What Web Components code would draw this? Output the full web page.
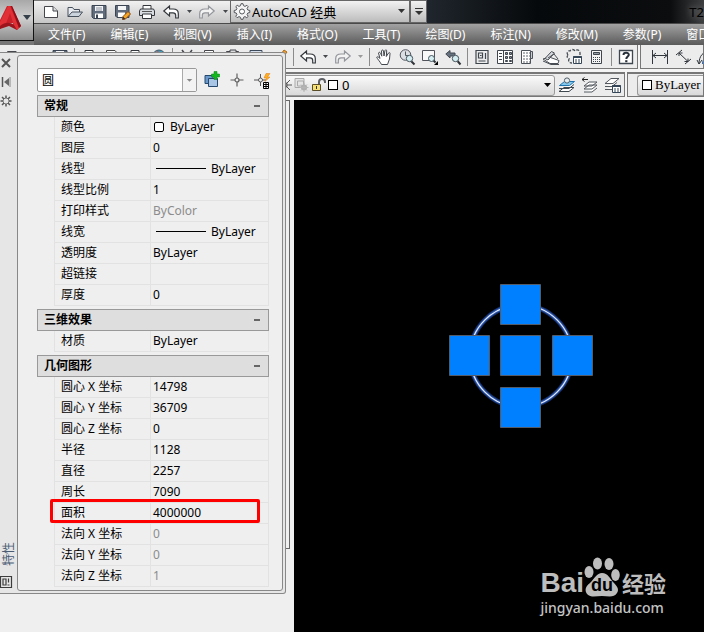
<!DOCTYPE html>
<html lang="zh-CN">
<head>
<meta charset="utf-8">
<title>AutoCAD</title>
<style>
html, body { height: 100%; }
body { margin: 0; overflow: hidden; background: #efefef; color: #000; font: 12px/16px "Noto Sans", "Noto Sans CJK SC", sans-serif; }
</style>
</head>
<body>
<cad-app></cad-app>
<script>
const ICONS = {
  new: '<path d="M1.5 2.5H10L14.5 7v6.500H1.5z" fill="#fff" stroke="#45474c"/><path d="M10 2.500V7h4.500" fill="#ddd" stroke="#45474c"/>',
  open: '<path d="M1 12.500V3.500H5.500L7 5.500h5.500V8" fill="#e8ebef" stroke="#46505c"/><path d="M1 12.500 5 8h10.500L12 12.500z" fill="#cbd3dc" stroke="#46505c"/>',
  save: '<path d="M1 1.500H15V14.500H2.500L1 13z" fill="#606b7b" stroke="#3b4453"/><path d="M4 2h8v5H4z" fill="#f4f5f7"/><path d="M5 4h6M5 6h6" stroke="#8a929c"/><path d="M4 9.500h8V14H4z" fill="#fff"/><path d="M5 10.500h2V14H5z" fill="#3b4453"/>',
  saveas: '<path d="M.5 1.500H14V13.500H2L.5 12z" fill="#606b7b" stroke="#3b4453"/><path d="M3 2h8v4H3z" fill="#f4f5f7"/><path d="M3 8.500h7V13H3z" fill="#fff"/><path d="M8 12.500 13 7.500 15.500 10 10.500 15 7.500 15.500z" fill="#f5a524" stroke="#8a4a16"/><path d="M8 12.500 10.500 15 7.500 15.500z" fill="#333"/>',
  print: '<path d="M4 5V1.500h8V5" fill="#fff" stroke="#33363b"/><path d="M1.500 5h13l1 2v4.500H.5V7z" fill="#d9dce0" stroke="#33363b"/><path d="M3.500 10h9v4.500h-9z" fill="#fff" stroke="#33363b"/><path d="M3 7.500h10" stroke="#555"/>',
  preview: '<path d="M2.500 1.500H11L14 5v9.500H2.500z" fill="#fff" stroke="#444"/><circle cx="10" cy="9" r="3" fill="#bcdcee" stroke="#444"/>',
  globe: '<circle cx="9" cy="7.500" r="6.500" fill="#3da1bd" stroke="#456"/><path d="M4 4l4-2 2 2-2 3-3-1z" fill="#d64a4a"/><path d="M11 3l3 3-3 2z" fill="#e6f4f8"/>',
  cut: '<path d="M3 1 12 13M13 1 4 13" stroke="#45474c" stroke-width="1.500" fill="none"/><circle cx="3" cy="13" r="2" fill="none" stroke="#45474c"/><circle cx="13" cy="13" r="2" fill="none" stroke="#45474c"/>',
  copy: '<path d="M2.500 1.500h9v10h-9z" fill="#fff" stroke="#45474c"/><path d="M6 4.500h9V15H6z" fill="#eee" stroke="#45474c"/>',
  paste: '<path d="M1.500 2.500h12v12h-12z" fill="#8d949d" stroke="#45474c"/><path d="M5 1h6v3H5z" fill="#ddd" stroke="#45474c"/>',
  brush: '<path d="M2 1.500h12v4H2z" fill="#d4dde9" stroke="#3c4a5b"/><path d="M8 6v8" stroke="#444"/>',
  pencil: '<path d="M5 12 13 1l3 2-8 11z" fill="#f5a02c" stroke="#a66a1d"/>',
  undo: '<path d="M.8 7 6.500 2v3H10c3.500 0 5.300 2 5.300 4.500V14h-2.600v-2.500c0-2-1-2.700-2.700-2.700H6.500V12z" fill="#fff" stroke="#34383d" stroke-width="1.200"/>',
  redo: '<path d="M15.200 7 9.500 2v3H6C2.500 5 .7 7 .7 9.500V14h2.600v-2.500c0-2 1-2.700 2.700-2.700h3.500V12z" fill="#f3f3f3" stroke="#92959a" stroke-width="1.200"/>',
  hand: '<path d="M5.500 15.500C4 12.500 1 9.500.7 8.200c.8-1 2 0 3.300 1.300L2.500 4c.5-1.200 1.500-.8 2 .2l1.300 3L5.500 2c.4-1.400 1.800-1.300 2 0L8 7l1-5.500c.6-1.200 1.800-.7 1.700.5L10.300 7.500 12.500 4c.9-1 1.900-.2 1.500.9L13.500 10 11.500 15.500z" fill="#fff" stroke="#43484e"/>',
  zoomrt: '<circle cx="6.500" cy="6" r="5.300" fill="#dce0e4" stroke="#52575e"/><path d="M6.500 2.500V6.500H9.500" fill="none" stroke="#52575e"/><path d="M12 12 15.500 15.500" stroke="#303439" stroke-width="2"/><circle cx="10.500" cy="9.500" r="3.200" fill="#d5eef2" stroke="#45545d"/>',
  zoomwin: '<path d="M.5 1.500h12v10H.5z" fill="#f8f8f8" stroke="#50545a"/><path d="M11 11 13.500 13.500" stroke="#303439" stroke-width="2"/><circle cx="9.500" cy="9.500" r="3" fill="#d5eef2" stroke="#45545d"/><path d="M16 12v4h-4z" fill="#000"/>',
  zoomprev: '<path d="M.8 5 5 1.500V4h5v3H5V9z" fill="#65717e" stroke="#434a52"/><path d="M12.500 12 15.500 15.500" stroke="#303439" stroke-width="2"/><circle cx="10.500" cy="9.500" r="3.200" fill="#d5eef2" stroke="#45545d"/>',
  props: '<path d="M2 1.500h12v13H2zM4.500 4h4v5h-4zM11.500 4v6M4.500 12h7M6 6.500h1.500" fill="none" stroke="#3f464e" stroke-width="1.200"/>',
  design: '<path d="M.5 1.500h15v13H.5z" fill="#fff" stroke="#3f464e"/><path d="M6.500 2v12M2 4.500h3M2 7.500h3M2 10.500h3" stroke="#3f464e"/><path d="M8.500 3.500h2v2h-2zM12.500 3.500h2v2h-2zM8.500 7.500h2v2h-2zM12.500 7.500h2v2h-2zM8.500 11.500h2v1h-2zM12.500 11.500h2v1h-2z" fill="#87909b" stroke="#3f464e"/>',
  palettes: '<path d="M1.500 1.500h9v13h-9z" fill="#fff" stroke="#4c5259"/><path d="M10.500 2.500h2v7h-2z" fill="#c8ccd1" stroke="#4c5259"/><path d="M3 4h7M3 7h7M3 10h7M3 13h7" stroke="#5e666f" stroke-dasharray="2 1"/>',
  sheet: '<path d="M0 10 6 8l10 3.500-1 3H7z" fill="#fff" stroke="#494e54"/><path d="M0 12 8 15.500h8" stroke="#494e54" fill="none"/><path d="M2 9.500 8.500 2.500l3 1.500-6.500 7z" fill="#d5d8dc" stroke="#494e54"/><path d="M5 9 11 5l4 5" stroke="#494e54" fill="none"/>',
  markup: '<path d="M2 6c-2-2 0-5 2-4 1-2 4-2 5 0 2-2 5-1 5 2v2M2 6c-2 2 0 4 1 4-1 2 0 4 3 4" fill="none" stroke="#454b52" stroke-dasharray="3 1.500" stroke-width="1.300"/><path d="M7.500 7.500h8v7h-8z" fill="#fff" stroke="#344658"/><path d="M7.500 8h8" stroke="#344658" stroke-width="2"/><path d="M9 11h2m1 0h2M9 13h2m1 0h2" stroke="#344658"/>',
  calc: '<path d="M2.500 1.500h10v13h-10z" fill="#f4f4f4" stroke="#3f464e"/><path d="M4.500 3.500h6v2h-6z" fill="#9199a2" stroke="#3f464e"/><path d="M4 8.500h7M4 10.500h7M4 12.500h7" stroke="#3f464e" stroke-dasharray="1 1"/>',
  help: '<path d="M1.500 1.500h13v13h-13z" fill="#fff" stroke="#3e464f" stroke-width="1.300"/><path d="M5.500 6c0-3 5.300-3 5.300-.2C10.800 7.500 8.300 7.500 8.300 10" fill="none" stroke="#27303a" stroke-width="2"/><path d="M7.200 11.200h2.200v2H7.200z" fill="#27303a"/>',
  linear: '<path d="M.5 1v14M15.500 1v14M1 6.500h14M4 4 1 6.500 4 9M12 4l3 2.500L12 9" fill="none" stroke="#30363c"/>',
  aligned: '<path d="M1 6 7 1M10 15l6-5M4 4l9 8.500M4 7V4h3.500M13 9.500v3H9.500" fill="none" stroke="#30363c"/>',
  arc: '<path d="M1 15C1 7 5 2 13 2" fill="none" stroke="#30363c"/><path d="M5 15c0-4 3-8 8-8" fill="none" stroke="#1b68c4" stroke-width="2"/><path d="M4 11 1 15-1 11" fill="none" stroke="#30363c"/>',
  layerA: '<path d="M0 14.500h10l5-4H5zM0 11.500h10l5-4" fill="#fff" stroke="#40484f"/><path d="M.5 8.500h10l5-4H5.500z" fill="#83c9ee" stroke="#1f74ad"/><circle cx="8" cy="3.500" r="2.600" fill="#e6edf0" stroke="#53606c"/>',
  layerB: '<path d="M2 15h8l5-4M2 12h8l5-4H7zM2 9h8l5-4H7L2 9z" fill="#fff" stroke="#53585f"/><path d="M0 2.500h6M0 2.500l2.500-2M0 2.500l2.500 2" fill="none" stroke="#222"/>',
  layerC: '<path d="M0 12.500h7l5-4M0 9.500h7l5-4M0 6.500h8l6-5H6z" fill="#fff" stroke="#53585f"/><path d="M7.500 8.500h8v7h-8z" fill="#fff" stroke="#344658"/><path d="M7.500 9h8" stroke="#344658" stroke-width="2"/><path d="M9 12h2m1 0h2M9 14h2m1 0h2" stroke="#344658"/>',
  freeze: '<path d="M1 1.500h9v9H1zM3.500 4h6v5h-6z" fill="#e4e4e4" stroke="#aaa"/><circle cx="10" cy="10.500" r="3" fill="#aaa"/><path d="M10 6v9M5.500 10.500h9M7 7.500l6 6M13 7.500l-6 6" stroke="#b5b5b5"/>',
  lock: '<path d="M1.500 7.500h8v6h-8z" fill="#f5df72" stroke="#5a4e28"/><path d="M8 7V5c0-4 6-4 6 0v1" fill="none" stroke="#5c5f64" stroke-width="2"/><path d="M5.500 9v3" stroke="#333"/>',
  sun: '<circle cx="8" cy="8" r="3" fill="#999"/><path d="M8 1v14M1 8h14M3 3l10 10M13 3 3 13" stroke="#555"/>',
  gear: '<path d="M7 .7h2l.5 2 1.500.7 1.900-1.100 1.300 1.400-1.100 1.800.7 1.500 2 .5v2l-2 .5-.7 1.500 1.100 1.900-1.400 1.300-1.800-1.100-1.500.7-.5 2H7l-.5-2-1.500-.7-1.900 1.100-1.300-1.400 1.100-1.800-.7-1.500-2-.5v-2l2-.5.7-1.500-1.100-1.900 1.400-1.300L5 3.400l1.500-.7z" fill="#f4f4f4" stroke="#55585d"/><circle cx="8" cy="8.500" r="2.500" fill="#fff" stroke="#55585d"/>',
  arrow: '<path d="M0 6h5L2.500 9z" fill="#45484c"/>',
  arrowoff: '<path d="M0 6h5L2.500 9z" fill="#9a9a9a"/>',
  pick: '<path d="M1 3.500h8v8H1z" fill="#6c99cc" stroke="#26486f"/><path d="M4.500 6.500h9v8h-9z" fill="#a9c5e6" stroke="#26486f"/><path d="M10 -.5h3v2.500h2.500v3H13v2.500h-3V5H7.500V2H10z" fill="#12b81d" stroke="#0b7c14" stroke-width=".5"/>',
  cross: '<path d="M8 1.500v13M1.500 8h13" stroke="#606060" stroke-width="1.200"/><circle cx="8" cy="8" r="2" fill="#efefef" stroke="#606060" stroke-width="1.200"/>',
  quick: '<path d="M6.500 2v12M0 8h12" stroke="#555"/><circle cx="6.500" cy="8" r="2" fill="#efefef" stroke="#555"/><path d="M12 1.500h4L13.500 5H16l-5 4.500L12.500 6H10z" fill="#ffae1c" stroke="#d8781e" stroke-width=".5"/><path d="M9.500 10.500h5v6h-5zM9.500 12.500h5M12 10.500v6M9.500 14.500h5" fill="#fff" stroke="#000"/>',
  close: '<path d="M4 4 12 12M12 4 4 12" stroke="#555" stroke-width="2"/>',
  pin: '<path d="M4.500 3v10" stroke="#555" stroke-width="1.500"/><path d="M11 4v8L6 8z" fill="#666"/><path d="M12 3v10" stroke="#888"/>',
  cog: '<circle cx="8" cy="8" r="3" fill="none" stroke="#777"/><path d="M8 2.500V5M8 11v2.500M2.500 8H5M11 8h2.500M4 4l2 2M10 10l2 2M12 4l-2 2M6 10l-2 2" stroke="#555" stroke-width="1.500"/>',
  palette: '<path d="M2.500 2.500h11v11h-11zM5 5h3v6H5zM10.500 4.500v4M9.500 11h2" fill="none" stroke="#3c3c3c" stroke-width="1.200"/>'
};
const svg = (n, w = 16) => `<svg viewBox="0 0 ${w} 16" width="${w}" height="16" aria-hidden="true">${ICONS[n]}</svg>`;

function define(name, css, html) {
  customElements.define(name, class extends HTMLElement {
    constructor() {
      super();
      this.attachShadow({ mode: 'open' });
    }
    connectedCallback() {
      const t = document.createElement('template');
      t.innerHTML = `<style>*{box-sizing:border-box}${css}</style>` + (typeof html === 'function' ? html(this) : html);
      this.shadowRoot.replaceChildren(t.content.cloneNode(true));
    }
  });
}
const tool = (icon, label) => `<tool-button icon="${icon}" label="${label}"></tool-button>`;

define('tool-button', `
  :host{display:block;flex:none}
  button{display:block;padding:0;border:0;background:none;height:16px}
  svg{display:block;overflow:visible}`,
  el => {
    const n = el.getAttribute('icon');
    return `<button type="button" aria-label="${el.getAttribute('label')}">${svg(n, n.startsWith('arrow') ? 5 : 16)}</button>`;
  });

define('cad-glyph', `:host{display:block;flex:none}svg{display:block;overflow:visible}`,
  el => svg(el.getAttribute('icon')));

define('tool-sep', `:host{display:block;flex:none;width:1px;height:18px;margin:0 -1px;background:#8b8b8b}`, '');

define('tool-bar', `
  :host{display:flex;align-items:center;gap:7px;flex:none;min-width:0;height:100%;background:#ececec;border:solid #777;border-width:0 1px 1px 0;overflow:hidden}`,
  '<slot></slot>');

define('app-button', `
  :host{display:block;flex:none;width:34px}
  button{display:flex;align-items:center;justify-content:space-between;width:100%;height:41px;padding:0 2px 4px 0;border:solid #111;border-width:0 1px 1px 0;background:linear-gradient(#a8a8a8,#d0d0d0 45%,#8c8c8c);overflow:hidden}
  svg{display:block;flex:none}`,
  `<button type="button" aria-label="应用程序菜单">
    <svg viewBox="0 0 22 26" width="22" height="26" aria-hidden="true"><path d="M7 1h5l9 20-4 4-4-3v-4H6l-6 6v-9z" fill="#c81f29"/><path d="M8 1 0 17v6l5-2 5-13 4 13 3 4 2-2L10 1z" fill="#e23136"/><path d="M11 1h1l9 20-2 2z" fill="#8f0f18"/><path d="M0 21c5-4 10-4 14-1l3 5-4-2-4-2-9 3z" fill="#9e141d"/></svg>
    <svg viewBox="0 0 8 6" width="8" height="6" aria-hidden="true"><path d="M0 0h8L4 5z" fill="#36404a"/></svg>
  </button>`);

define('quick-access', `
  :host{display:flex;height:23px;background:#0a0d10}
  .tools{display:flex;align-items:center;gap:8px;padding:0 3px 0 9px;background:linear-gradient(#f1f1f1,#c6c6c6);border-top:1px solid #777}
  .tools tool-button[icon=arrow]{margin-right:-1px}
  label{position:relative;display:block;width:180px;border:1px solid #666;background:linear-gradient(#f2f2f2,#bcbcbc)}
  cad-glyph{position:absolute;left:3px;top:2px}
  .down{position:absolute;right:4px;top:8px}
  select{appearance:none;display:block;width:100%;height:21px;padding:0 0 0 21px;border:0;background:none;font:13px/20px "Noto Sans","Noto Sans CJK SC",sans-serif;color:#000}
  .more{flex:none;width:17px;padding:0;border:1px solid #666;background:linear-gradient(#f2f2f2,#bcbcbc)}
  .more svg{display:block;margin:auto}
  .title{flex:1;min-width:0;overflow:hidden;text-align:right;background:linear-gradient(90deg,#20262d,#06090b 40%,#0b0d0f 88%,#3c3e40);color:#000;font-size:13px;line-height:24px;text-shadow:0 0 6px #999}`,
  `<div class="tools">${tool('new','新建')}${tool('open','打开')}${tool('save','保存')}${tool('saveas','另存为')}${tool('print','打印')}${tool('undo','放弃')}${tool('arrow','放弃列表')}${tool('redo','重做')}${tool('arrow','重做列表')}</div>
  <label><cad-glyph icon="gear"></cad-glyph><select aria-label="工作空间"><option>AutoCAD 经典</option></select>
  <svg class="down" viewBox="0 0 7 4" width="7" height="4" aria-hidden="true"><path d="M0 0h7L3.500 4z" fill="#333"/></svg></label>
  <button class="more" type="button" aria-label="自定义快速访问工具栏"><svg viewBox="0 0 8 7" width="8" height="7" aria-hidden="true"><path d="M0 0h8v1H0zM0 3h8L4 7z" fill="#333"/></svg></button>
  <div class="title">T2</div>`);

define('menu-bar', `
  :host{display:block;height:22px;border-top:1px solid #4a4a4a;background:linear-gradient(#a2a2a2,#5a5a5a)}
  nav{display:flex;gap:25px;padding-left:14px;overflow:hidden}
  button{flex:none;padding:0;border:0;background:none;color:#fff;font:12px/22px "Noto Sans","Noto Sans CJK SC",sans-serif;white-space:nowrap}`,
  '<nav>' + ['文件(F)','编辑(E)','视图(V)','插入(I)','格式(O)','工具(T)','绘图(D)','标注(N)','修改(M)','参数(P)','窗口'].map(t => `<button type="button">${t}</button>`).join('') + '</nav>');

define('tool-rows', `
  :host{display:flex;flex-direction:column;gap:3px;background:#f4f4f4}
  .row{display:flex;gap:2px;height:24px}
  .row + .row{height:25px}
  .std{padding:0 3px 0 6px}
  .dim{flex:1;padding-left:11px;border-left:1px solid #777}
  .layers{flex:0 0 625px;border-top:2px solid #777;gap:7px;padding-right:3px}
  .props{flex:1;border-top:2px solid #777;border-left:1px solid #777;padding-left:9px}
  .combo{display:flex;align-items:center;position:relative;flex:1;min-width:0;height:21px;border:1px solid #999;border-radius:3px;background:linear-gradient(#fafafa,#d9d9d9)}
  .combo svg{position:absolute;right:3px}
  select{appearance:none;width:100%;height:19px;padding:0;border:0;background:none;color:#000;font:13px/18px "Noto Sans","Noto Sans CJK SC",sans-serif}
  .layers .combo{padding-left:276px;gap:1px;margin-right:-3px}
  .layers .sw{margin-right:3px}
  .props .combo{padding-left:4px;gap:3px;border-right:0;border-radius:3px 0 0 3px}
  .props select{font:13px/18px "Liberation Serif",serif}
  .sw{flex:none;width:10px;height:10px;border:1px solid #000;background:#fff}`,
  `<div class="row"><tool-bar class="std">${tool('new','新建')}${tool('open','打开')}${tool('save','保存')}<tool-sep></tool-sep>${tool('print','打印')}${tool('preview','打印预览')}${tool('print','发布')}${tool('globe','三维打印')}<tool-sep></tool-sep>${tool('cut','剪切')}${tool('copy','复制')}${tool('paste','粘贴')}${tool('brush','特性匹配')}${tool('pencil','块编辑器')}<tool-sep></tool-sep>${tool('undo','放弃')}${tool('arrow','放弃列表')}${tool('redo','重做')}${tool('arrowoff','重做列表')}<tool-sep></tool-sep>${tool('hand','平移')}${tool('zoomrt','实时缩放')}${tool('zoomwin','窗口缩放')}${tool('zoomprev','缩放上一个')}<tool-sep></tool-sep>${tool('props','特性')}${tool('design','设计中心')}${tool('palettes','工具选项板')}${tool('sheet','图纸集')}${tool('markup','标记集')}${tool('calc','计算器')}<tool-sep></tool-sep>${tool('help','帮助')}</tool-bar>
  <tool-bar class="dim">${tool('linear','线性')}${tool('aligned','对齐')}${tool('arc','弧长')}</tool-bar></div>
  <div class="row"><tool-bar class="layers"><div class="combo"><cad-glyph icon="sun"></cad-glyph><cad-glyph icon="freeze"></cad-glyph><cad-glyph icon="lock"></cad-glyph><span class="sw"></span><select aria-label="图层"><option>0</option></select><svg viewBox="0 0 7 4" width="7" height="4" aria-hidden="true"><path d="M0 0h7L3.500 4z"/></svg></div>${tool('layerA','置为当前')}${tool('layerB','上一个图层')}${tool('layerC','图层状态')}</tool-bar>
  <tool-bar class="props"><div class="combo"><span class="sw"></span><select aria-label="颜色"><option>ByLayer</option></select></div></tool-bar></div>`);

define('drawing-canvas', `
  :host{display:block;position:relative;flex:1;min-width:0;background:#000;overflow:hidden}
  .figure{position:absolute;left:155px;top:184px}
  baidu-mark{position:absolute;right:38px;bottom:15px}`,
  `<svg class="figure" viewBox="0 0 144 144" width="144" height="144" role="img" aria-label="选中的圆">
    <g fill="none"><circle cx="72" cy="72" r="51" stroke="#14306c" stroke-width="5"/><circle cx="72" cy="72" r="51" stroke="#2f57ad" stroke-width="3"/><circle cx="72" cy="72" r="51" stroke="#e6edff" stroke-width="1.200"/></g>
    <g fill="#007fff" stroke="#535c68"><path d="M51.500.5h40v40h-40zM.5 51.500h40v40H.5zM51.500 51.500h40v40h-40zM103.500 51.500h40v40h-40zM51.500 103.500h40v40h-40z"/></g>
  </svg><baidu-mark></baidu-mark>`);

define('baidu-mark', `
  :host{display:block;color:#bdbdbd}
  .brand{display:flex;align-items:flex-end;height:42px;font:bold 28px/32px "Liberation Sans",sans-serif}
  .paw{position:relative;width:36px;height:42px}
  .paw svg{display:block}
  .paw span{position:absolute;left:0;right:0;bottom:5px;text-align:center;color:#000;font-size:18px;line-height:18px}
  .cn{font:bold 22px/34px "Noto Sans CJK SC",sans-serif;padding-left:2px}
  .url{font:500 14px/18px "Noto Sans",sans-serif;color:#c4c4c4}`,
  `<div class="brand"><span>Bai</span><div class="paw"><svg viewBox="0 0 36 40" width="36" height="40" aria-hidden="true"><g fill="#bdbdbd"><ellipse cx="5" cy="15" rx="4.500" ry="6"/><ellipse cx="13.500" cy="6.500" rx="4.500" ry="6"/><ellipse cx="25" cy="7" rx="4.500" ry="6"/><ellipse cx="31.500" cy="18" rx="4.300" ry="6"/><path d="M18 16c6 0 8 6 12 10 4 4 5 7 3 10-3 5-9 3-15 3s-11 2-15-2c-3-4-1-8 3-11 4-4 7-10 12-10z"/></g></svg><span>du</span></div><span class="cn">经验</span></div><div class="url">jingyan.baidu.com</div>`);

const line = '<i class="line"></i>';
const SECTIONS = [
  ['常规', [['颜色','<i class="sw"></i>ByLayer'],['图层','0'],['线型',line + 'ByLayer'],['线型比例','1'],['打印样式','ByColor','off'],['线宽',line + 'ByLayer'],['透明度','ByLayer'],['超链接',''],['厚度','0']]],
  ['三维效果', [['材质','ByLayer']]],
  ['几何图形', [['圆心 X 坐标','14798'],['圆心 Y 坐标','36709'],['圆心 Z 坐标','0'],['半径','1128'],['直径','2257'],['周长','7090'],['面积','4000000','mark'],['法向 X 坐标','0','off'],['法向 Y 坐标','0','off'],['法向 Z 坐标','1','off']]]
];

define('property-section', `
  :host{display:block}
  h2{display:flex;align-items:center;justify-content:space-between;margin:0;height:22px;padding:0 8px 0 6px;border:1px solid #999;background:#dedede;font:bold 12px/20px "Noto Sans","Noto Sans CJK SC",sans-serif}
  button{width:6px;height:12px;padding:0;border:0;background:linear-gradient(#666,#666) center/6px 2px no-repeat}
  table{width:calc(100% - 17px);margin-left:17px;border-spacing:0;table-layout:fixed}
  tr{position:relative}
  th,td{height:21px;padding:0 0 0 6px;font-weight:400;line-height:18px;text-align:left;white-space:nowrap;border:solid #e2e2e2;border-width:0 0 1px 1px}
  th{width:96px}
  td{padding-left:2px;border-right-width:1px}
  .off td{color:#8c8c8c}
  .sw{display:inline-block;width:10px;height:10px;margin:0 6px 0 1px;border:1px solid #000;border-radius:2px;vertical-align:-1px;background:#fff}
  .line{display:inline-block;width:50px;height:1px;margin:0 5px 0 3px;background:#000;vertical-align:4px}
  .mark th::after{content:"";position:absolute;top:-4px;bottom:1px;left:-4px;right:9px;border:3px solid #f00;border-radius:2px}`,
  el => {
    const [title, rows] = SECTIONS[+el.getAttribute('index')];
    return `<h2>${title}<button type="button" aria-label="折叠${title}"></button></h2><table><tbody>${rows.map(([k, v, c]) => `<tr class="${c || ''}"><th scope="row">${k}</th><td>${v}</td></tr>`).join('')}</tbody></table>`;
  });

define('properties-palette', `
  :host{display:flex;background:#e6e6e6;border:solid #888;border-width:1px 1px 1px 0;border-radius:0 3px 3px 0;padding:2px 2px 2px 0}
  .strip{display:flex;flex-direction:column;flex:none;width:17px;padding-bottom:1px}
  .strip tool-button,.strip cad-glyph{margin:0 0 3px -2px}
  .strip cad-glyph{margin-bottom:0}
  .name{margin-top:auto;margin-bottom:8px;width:16px;writing-mode:vertical-rl;text-orientation:sideways;transform:rotate(180deg);color:#4a5c74;font:12px/16px "Noto Sans CJK SC",sans-serif}
  .panel{flex:1;min-width:0;display:flex;flex-direction:column;gap:3px;padding:12px 13px 3px 19px;border:1px solid #888;border-radius:3px;background:#efefef}
  .pick{display:flex;align-items:center;gap:9px;height:24px}
  label{position:relative;flex:0 0 160px;height:24px;margin-right:-2px;border:1px solid #999;border-radius:2px;background:#fff}
  select{appearance:none;width:100%;height:22px;padding:0 4px;border:0;background:none;color:#000;font:12px/20px "Noto Sans CJK SC",sans-serif}
  .drop{position:absolute;right:0;top:0;width:14px;height:22px;border-left:1px solid #aaa;background:#f3f3f3}`,
  `<div class="strip">${tool('close','关闭')}${tool('pin','自动隐藏')}${tool('cog','特性设置')}<span class="name">特性</span><cad-glyph icon="palette"></cad-glyph></div>
  <div class="panel"><div class="pick"><label><select aria-label="选定对象"><option>圆</option></select><svg class="drop" viewBox="0 0 14 22" aria-hidden="true"><path d="M4 10h6l-3 3z" fill="#888"/></svg></label>${tool('pick','切换 PICKADD')}${tool('cross','选择对象')}${tool('quick','快速选择')}</div>
  <property-section index="0"></property-section><property-section index="1"></property-section><property-section index="2"></property-section></div>`);

define('cad-app', `
  :host{display:flex;flex-direction:column;position:relative;height:100vh;overflow:hidden}
  header{display:flex;height:45px;background:#777}
  .top{flex:1;min-width:0}
  main{display:flex;flex:1;min-height:0;padding-top:3px;background:#f4f4f4}
  .dock{flex:0 0 294px;background:#efefef}
  .behind{width:290px;height:449px;border:solid #666;border-width:1px 1px 1px 0}
  properties-palette{position:absolute;left:0;top:52px;width:286px}`,
  `<header><app-button></app-button><div class="top"><quick-access></quick-access><menu-bar></menu-bar></div></header>
  <tool-rows></tool-rows>
  <main><div class="dock"><div class="behind"></div></div><drawing-canvas></drawing-canvas></main>
  <properties-palette></properties-palette>`);
</script>
</body>
</html>
